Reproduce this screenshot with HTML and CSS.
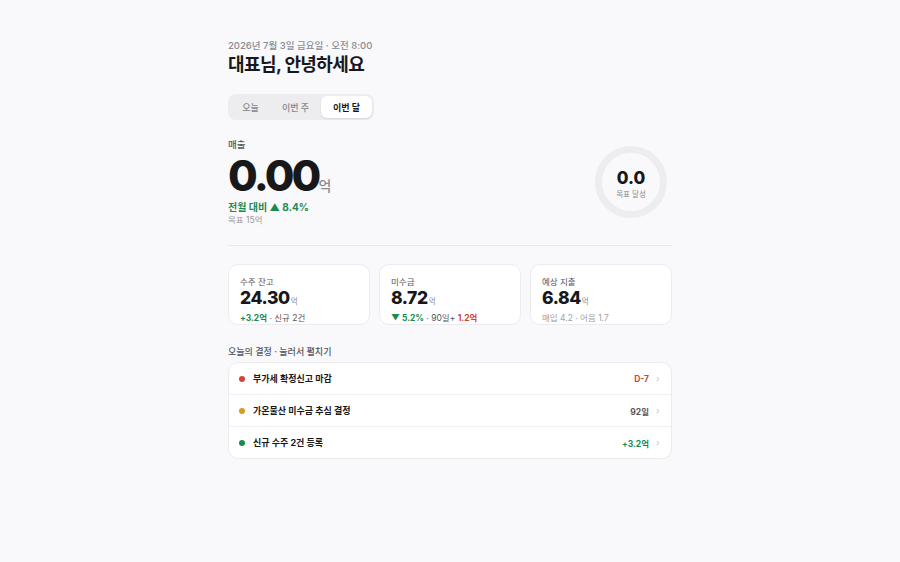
FILE: index.html
```html
<!DOCTYPE html>
<html lang="ko">
<head>
<meta charset="utf-8">
<link rel="stylesheet" href="styles.css">
</head>
<body>
<main class="page">
  <header class="head">
    <div class="date">2026년 7월 3일 금요일 · 오전 8:00</div>
    <h1 class="title">대표님, 안녕하세요</h1>
  </header>
  <nav class="seg">
    <button class="seg-btn">오늘</button>
    <button class="seg-btn">이번 주</button>
    <button class="seg-btn active">이번 달</button>
  </nav>
  <section class="hero">
    <div class="hero-left">
      <div class="label">매출</div>
      <div class="big"><span class="big-num">0.00</span><span class="big-unit">억</span></div>
      <div class="delta">전월 대비 ▲ 8.4%</div>
      <div class="goal">목표 15억</div>
    </div>
    <div class="ring">
      <svg class="ring-svg" width="74" height="74" viewBox="0 0 74 74">
        <circle cx="37" cy="37" r="32.5" fill="none" stroke="#ededf0" stroke-width="7"/>
      </svg>
      <div class="ring-text">
        <div class="ring-num">0.0</div>
        <div class="ring-cap">목표 달성</div>
      </div>
    </div>
  </section>
  <hr class="divider">
  <section class="cards">
    <div class="card">
      <div class="card-label">수주 잔고</div>
      <div class="card-val"><span class="num">24.30</span><span class="unit">억</span></div>
      <div class="card-sub"><span class="green">+3.2억</span> · 신규 2건</div>
    </div>
    <div class="card">
      <div class="card-label">미수금</div>
      <div class="card-val"><span class="num">8.72</span><span class="unit">억</span></div>
      <div class="card-sub"><span class="green">▼ 5.2%</span> · 90일+ <span class="red">1.2억</span></div>
    </div>
    <div class="card">
      <div class="card-label">예상 지출</div>
      <div class="card-val"><span class="num">6.84</span><span class="unit">억</span></div>
      <div class="card-sub muted">매입 4.2 · 어음 1.7</div>
    </div>
  </section>
  <div class="sec-title">오늘의 결정 · 눌러서 펼치기</div>
  <section class="list">
    <div class="row">
      <span class="dot dot-red"></span>
      <span class="row-text">부가세 확정신고 마감</span>
      <span class="row-tag red">D-7</span>
      <span class="chev">›</span>
    </div>
    <div class="row">
      <span class="dot dot-amber"></span>
      <span class="row-text">가온물산 미수금 추심 결정</span>
      <span class="row-tag gray">92일</span>
      <span class="chev">›</span>
    </div>
    <div class="row">
      <span class="dot dot-green"></span>
      <span class="row-text">신규 수주 2건 등록</span>
      <span class="row-tag green">+3.2억</span>
      <span class="chev">›</span>
    </div>
  </section>
</main>
</body>
</html>
```

FILE: styles.css
```css
* { box-sizing: border-box; }
html, body { margin: 0; padding: 0; }
body {
  background: #f9f9fb;
  font-family: Inter, "Noto Sans CJK KR", "Noto Sans", sans-serif;
  color: #18181b;
}
.page {
  width: 444px;
  margin: 0 auto;
  padding-top: 39px;
}
.date {
  font-size: 9.5px;
  color: #8b8b92;
  font-weight: 500;
  line-height: 13px;
}
.title {
  margin: 1px 0 0;
  font-size: 18px;
  font-weight: 700;
  letter-spacing: -0.6px;
  line-height: 24px;
  color: #18181b;
}
.seg {
  display: inline-flex;
  margin-top: 17px;
  background: #ededf0;
  border-radius: 8px;
  padding: 2px 2px 2px 3px;
}
.seg-btn {
  border: 0;
  background: transparent;
  font-family: inherit;
  font-size: 9px;
  font-weight: 500;
  color: #85858c;
  height: 22px;
  padding: 0;
  border-radius: 6px;
  width: 51px;
}
.seg-btn:first-child { width: 39px; }
.seg-btn.active {
  background: #fff;
  color: #18181b;
  font-weight: 600;
  box-shadow: 0 1px 2px rgba(0,0,0,0.1);
}
.hero {
  display: flex;
  justify-content: space-between;
  align-items: flex-start;
  margin-top: 18px;
  padding-bottom: 19px;
}
.label {
  font-size: 9.5px;
  color: #55555c;
  font-weight: 500;
  line-height: 13px;
}
.big {
  display: flex;
  align-items: baseline;
  margin-top: 3px;
  height: 42px;
}
.big-num {
  font-size: 43px;
  font-weight: 800;
  letter-spacing: -2.8px;
  line-height: 42px;
  color: #18181b;
}
.big-unit {
  font-size: 14px;
  color: #8b8b92;
  font-weight: 500;
  margin-left: 0;
}
.delta {
  margin-top: 4px;
  font-size: 10px;
  font-weight: 700;
  color: #1a8a52;
  line-height: 14px;
}
.goal {
  font-size: 8.5px;
  color: #9a9aa0;
  line-height: 12px;
}
.ring {
  position: relative;
  width: 74px;
  height: 74px;
  margin-top: 7px;
  margin-right: 4px;
}
.ring-svg { display: block; }
.ring-text {
  position: absolute;
  inset: 0;
  display: flex;
  flex-direction: column;
  align-items: center;
  justify-content: center;
  padding-top: 3px;
}
.ring-num {
  font-size: 17px;
  font-weight: 800;
  line-height: 18px;
  color: #18181b;
}
.ring-cap {
  font-size: 7.5px;
  color: #8b8b92;
  margin-top: 1px;
}
.divider {
  border: 0;
  border-top: 1px solid #e8e8ec;
  margin: 0;
}
.cards {
  display: grid;
  grid-template-columns: repeat(3, 1fr);
  gap: 9px;
  margin-top: 18px;
}
.card {
  background: #fff;
  border: 1px solid #ececf0;
  border-radius: 10px;
  height: 61px;
  padding: 11px 11px 0;
}
.card-label {
  font-size: 8.5px;
  color: #55555c;
  line-height: 12px;
}
.card-val {
  display: flex;
  align-items: baseline;
  margin-top: 0;
  line-height: 20px;
}
.card-val .num {
  font-size: 17.5px;
  font-weight: 800;
  letter-spacing: -0.4px;
}
.card-val .unit {
  font-size: 7.5px;
  color: #8b8b92;
  margin-left: 1px;
}
.card-sub {
  margin-top: 0;
  font-size: 8.5px;
  color: #55555c;
  line-height: 12px;
}
.card-sub .green { color: #1a8a52; font-weight: 700; }
.card-sub .red { color: #d0453a; font-weight: 700; }
.card-sub.muted { color: #a0a0a6; }
.sec-title {
  margin-top: 21px;
  font-size: 9px;
  color: #55555c;
  font-weight: 500;
  line-height: 12px;
}
.list {
  margin-top: 4px;
  background: #fff;
  border: 1px solid #ececf0;
  border-radius: 10px;
  overflow: hidden;
}
.row {
  display: flex;
  align-items: center;
  height: 32px;
  padding: 0 11px 0 10px;
  border-top: 1px solid #f0f0f3;
}
.row:first-child { border-top: 0; height: 31px; }
.dot {
  width: 6px;
  height: 6px;
  border-radius: 50%;
  margin-right: 8px;
}
.dot-red { background: #d0453a; }
.dot-amber { background: #d99a22; }
.dot-green { background: #1a8a52; }
.row-text {
  font-size: 9px;
  font-weight: 700;
  color: #18181b;
  flex: 1;
}
.row-tag {
  font-size: 8.5px;
  font-weight: 700;
}
.row-tag.red { color: #d0453a; }
.row-tag.gray { color: #55555c; }
.row-tag.green { color: #1a8a52; }
.chev {
  font-size: 9px;
  color: #c0c0c6;
  margin-left: 7px;
  width: 4px;
}
```
